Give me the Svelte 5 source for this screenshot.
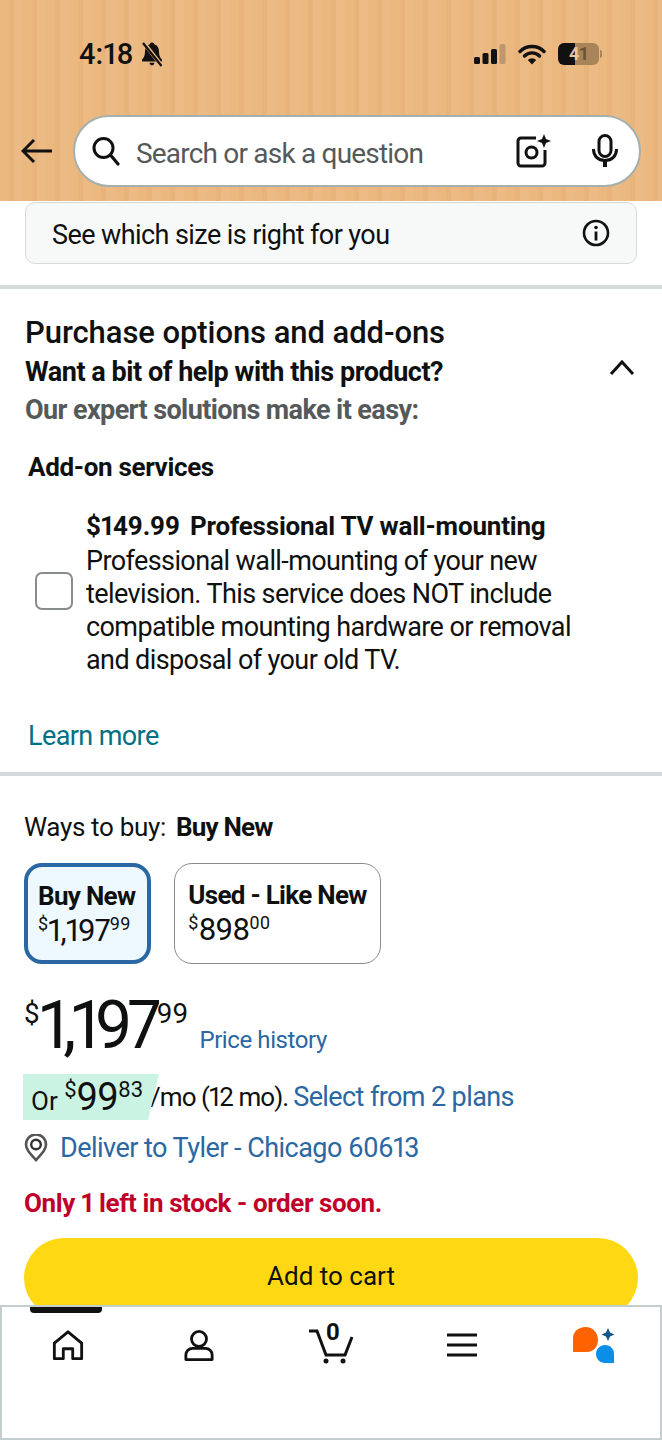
<script>
  const prices = [
    { label: 'Buy New', whole: '1,197', cents: '99', selected: true },
    { label: 'Used - Like New', whole: '898', cents: '00', selected: false }
  ];
</script>

<div class="page">
  <header class="top">
    <div class="status">
      <div class="clock">
        <span>4:18</span>
        <svg width="24" height="26" viewBox="0 0 24 26">
          <path d="M12 1.500c-1.300 0-2 .8-2.200 1.800C6.400 4.300 5 7 5 10.500c0 3.500-.8 6-3 8V20.500h20v-2c-2.200-2-3-4.500-3-8 0-3.500-1.400-6.200-4.800-7.200C14 2.300 13.300 1.500 12 1.500zM9.500 21.700c.3 1.600 1.300 2.600 2.500 2.600s2.200-1 2.500-2.600z" fill="#111"/>
          <path d="M3.500 1.500L21.500 24.500" stroke="#e9b67f" stroke-width="4"/>
          <path d="M3 2L21.500 25" stroke="#111" stroke-width="2.200"/>
        </svg>
      </div>
      <div class="sys">
        <svg width="32" height="22" viewBox="0 0 32 22">
          <rect x="0" y="14" width="6" height="7" rx="1.500" fill="#111"/>
          <rect x="8.500" y="10" width="6" height="11" rx="1.500" fill="#111"/>
          <rect x="17" y="6" width="6" height="15" rx="1.500" fill="#111"/>
          <rect x="25.500" y="1" width="6" height="20" rx="1.500" fill="#111" opacity=".2"/>
        </svg>
        <svg width="28" height="22" viewBox="0 0 28 22">
          <path d="M2 8.500a17 17 0 0 1 24 0M6.500 13a10.500 10.500 0 0 1 15 0" fill="none" stroke="#111" stroke-width="3.400" stroke-linecap="round"/>
          <path d="M14 21.500l-4.200-4.500a6 6 0 0 1 8.400 0z" fill="#111"/>
        </svg>
        <div class="battery">
          <div class="level"></div>
          <span class="d1">4</span><span class="d2">1</span>
        </div>
      </div>
    </div>

    <div class="searchrow">
      <svg class="back" width="32" height="26" viewBox="0 0 32 26">
        <path d="M31 13H2M13 2L2 13l11 11" fill="none" stroke="#111" stroke-width="3"/>
      </svg>
      <div class="search">
        <svg width="30" height="30" viewBox="0 0 30 30">
          <circle cx="12.500" cy="12" r="9.500" fill="none" stroke="#111" stroke-width="3"/>
          <path d="M19.500 19l7.500 9" stroke="#111" stroke-width="3.200" stroke-linecap="round"/>
        </svg>
        <span class="placeholder">Search or ask a question</span>
        <svg class="lens" width="36" height="34" viewBox="0 0 36 34">
          <path d="M20 4H5a3 3 0 0 0-3 3v22a3 3 0 0 0 3 3h21a3 3 0 0 0 3-3V16" fill="none" stroke="#111" stroke-width="3"/>
          <circle cx="15.500" cy="18.500" r="5.500" fill="none" stroke="#111" stroke-width="3"/>
          <path d="M28 0l2 5 5 2-5 2-2 5-2-5-5-2 5-2z" fill="#111"/>
        </svg>
        <svg class="mic" width="28" height="34" viewBox="0 0 28 34">
          <rect x="8" y="1.500" width="12" height="21" rx="6" fill="none" stroke="#111" stroke-width="3"/>
          <path d="M2.500 15c0 7 4.500 11.500 11.500 11.500S25.500 22 25.500 15" fill="none" stroke="#111" stroke-width="3"/>
          <path d="M14 26v7" stroke="#111" stroke-width="4"/>
        </svg>
      </div>
    </div>
  </header>

  <div class="sizebox">
    <span>See which size is right for you</span>
    <svg width="28" height="28" viewBox="0 0 28 28">
      <circle cx="14" cy="14" r="12" fill="none" stroke="#111" stroke-width="2.600"/>
      <circle cx="14" cy="8.500" r="1.800" fill="#111"/>
      <path d="M14 12.500v9" stroke="#111" stroke-width="2.800"/>
    </svg>
  </div>

  <section class="addons">
    <h2>Purchase options and add-ons</h2>
    <div class="helprow">
      <div>
        <div class="help">Want a bit of help with this product?</div>
        <div class="expert">Our expert solutions make it easy:</div>
      </div>
      <svg class="chevron" width="26" height="16" viewBox="0 0 26 16">
        <path d="M2 15L13 3l11 12" fill="none" stroke="#111" stroke-width="3"/>
      </svg>
    </div>
    <h3>Add-on services</h3>
    <div class="service">
      <div class="check"></div>
      <div class="desc">
        <div class="svc-title"><span>$149.99</span><span>Professional TV wall-mounting</span></div>
        <p>Professional wall-mounting of your new television. This service does NOT include compatible mounting hardware or removal and disposal of your old TV.</p>
      </div>
    </div>
    <a class="learn" href="#learn">Learn more</a>
  </section>

  <section class="buy">
    <div class="ways">Ways to buy:<b>Buy New</b></div>
    <div class="options">
      {#each prices as p}
        <div class="option" class:selected={p.selected}>
          <b>{p.label}</b>
          <div class="optprice"><sup>$</sup>{p.whole}<sup class="c">{p.cents}</sup></div>
        </div>
      {/each}
    </div>
    <div class="pricerow">
      <div class="bigprice"><sup>$</sup>1,197<sup class="c">99</sup></div>
      <a class="history" href="#history">Price history</a>
    </div>
    <div class="monthly">
      <span class="tag">Or <span class="tagprice"><sup>$</sup>99<sup class="c">83</sup></span></span>
      <span class="mo">/mo (12 mo).</span>
      <a href="#plans">Select from 2 plans</a>
    </div>
    <div class="deliver">
      <svg width="24" height="28" viewBox="0 0 24 28">
        <path d="M12 26C6 19.500 2 15.500 2 10.500a10 10 0 0 1 20 0C22 15.500 18 19.500 12 26z" fill="none" stroke="#555" stroke-width="2.600"/>
        <circle cx="12" cy="10.500" r="4.800" fill="none" stroke="#333" stroke-width="2.400"/>
      </svg>
      <a href="#deliver">Deliver to Tyler - Chicago 60613</a>
    </div>
    <div class="stock">Only 1 left in stock - order soon.</div>
    <div class="cart">Add to cart</div>
  </section>

  <nav class="tabs">
    <div class="indicator"></div>
    <svg width="32" height="32" viewBox="0 0 34 32">
      <path d="M2.500 30.500V14L17 2l14.500 12v16.500H22V20h-10v10.500z" fill="none" stroke="#111" stroke-width="3" stroke-linejoin="round"/>
    </svg>
    <svg width="30" height="33" viewBox="0 0 32 34">
      <circle cx="16" cy="10" r="8" fill="none" stroke="#111" stroke-width="3"/>
      <path d="M9 20h14a7 7 0 0 1 7 7v5H2v-5a7 7 0 0 1 7-7z" fill="none" stroke="#111" stroke-width="3" stroke-linejoin="round"/>
    </svg>
    <div class="carticon">
      <svg width="46" height="38" viewBox="0 0 46 38">
        <path d="M1 5h8l9 24h19l7-18" fill="none" stroke="#111" stroke-width="3"/>
        <circle cx="18" cy="35" r="2.500" fill="#111"/>
        <circle cx="35" cy="35" r="2.500" fill="#111"/>
      </svg>
      <span>0</span>
    </div>
    <svg width="30" height="24" viewBox="0 0 30 24">
      <path d="M0 2h30M0 12h30M0 22h30" stroke="#111" stroke-width="3"/>
    </svg>
    <svg width="42" height="38" viewBox="0 0 42 38">
      <path d="M12.500 1C20 1 25 7 25 14c0 7-5 12-11 12H0V12C0 6 5 1 12.500 1z" fill="#ff6200"/>
      <path d="M32 19c5.500 0 9 4 9 9v9h-9c-5 0-9-4-9-9s4-9 9-9z" fill="#0a8fe8"/>
      <path d="M35 2l2 4.500 4.500 2-4.500 2-2 4.500-2-4.500-4.500-2 4.500-2z" fill="#13568a"/>
    </svg>
  </nav>
</div>

<style>
  :global(body) {
    margin: 0;
    background: #fff;
  }

  .page {
    position: relative;
    width: 662px;
    height: 1440px;
    overflow: hidden;
    background: #fff;
    color: #0f1111;
    font-family: Roboto, 'Noto Sans', sans-serif;
    font-variant-numeric: proportional-nums;
  }

  a {
    color: #2a67a3;
    text-decoration: none;
  }

  sup {
    font-size: 0.58em;
    line-height: 0;
    letter-spacing: 0;
    vertical-align: baseline;
    position: relative;
    top: -0.6em;
  }

  .top {
    height: 201px;
    box-sizing: border-box;
    padding-top: 34px;
    background: repeating-linear-gradient(90deg, #ebb880 0 9px, #e8b47c 9px 14px, #ecba84 14px 23px);
  }

  .status {
    display: flex;
    justify-content: space-between;
    align-items: center;
    height: 40px;
    padding: 0 63px 0 79px;
  }

  .clock {
    display: flex;
    align-items: center;
    gap: 6px;
    font-size: 29px;
    font-weight: 500;
    color: #111;
  }

  .sys {
    display: flex;
    align-items: center;
    gap: 12px;
  }

  .battery {
    position: relative;
    width: 41px;
    height: 22px;
    border-radius: 6px;
    background: linear-gradient(90deg, #111 17px, #a98458 17px);
    text-align: center;
    font-size: 18px;
    font-weight: 700;
    line-height: 22px;
  }

  .battery::after {
    content: '';
    position: absolute;
    right: -3px;
    top: 7px;
    width: 2px;
    height: 8px;
    border-radius: 0 2px 2px 0;
    background: #a98458;
  }

  .d1 {
    color: #e9c59c;
  }

  .d2 {
    color: #6b5236;
  }

  .searchrow {
    display: flex;
    align-items: center;
    gap: 20px;
    margin-top: 41px;
    padding-left: 21px;
  }

  .back {
    flex: none;
  }

  .search {
    flex: none;
    display: flex;
    align-items: center;
    width: 568px;
    height: 72px;
    box-sizing: border-box;
    padding: 0 20px 0 16px;
    border: 2px solid #a3b0ad;
    border-radius: 36px;
    background: #fff;
  }

  .placeholder {
    flex: 1;
    margin: 4px 0 0 15px;
    font-size: 28px;
    letter-spacing: -0.8px;
    color: #565959;
  }

  .lens {
    margin-right: 39px;
  }

  .sizebox {
    display: flex;
    align-items: center;
    justify-content: space-between;
    box-sizing: border-box;
    height: 62px;
    margin: 1px 25px 0;
    padding: 0 26px;
    border: 1px solid #d5dbdb;
    border-radius: 10px;
    background: #f7f9f9;
    font-size: 27px;
    letter-spacing: -0.58px;
  }

  .sizebox span {
    margin-top: 3px;
  }

  .addons {
    margin-top: 21px;
    padding: 27px 25px 0;
    height: 491px;
    box-sizing: border-box;
    border-top: 4px solid #d5dbdb;
    border-bottom: 4px solid #d5dbdb;
  }

  h2 {
    margin: 0;
    font-size: 31px;
    font-weight: 500;
    letter-spacing: -0.07px;
    line-height: 34px;
  }

  .helprow {
    display: flex;
    justify-content: space-between;
    align-items: flex-start;
    padding-right: 2px;
  }

  .help {
    margin-top: 6px;
    font-size: 27px;
    font-weight: 700;
    letter-spacing: -0.46px;
    line-height: 32px;
  }

  .expert {
    margin-top: 6px;
    font-size: 27px;
    font-weight: 700;
    letter-spacing: -0.6px;
    line-height: 32px;
    color: #565959;
  }

  .chevron {
    margin-top: 9px;
  }

  h3 {
    margin: 25px 0 0 3px;
    font-size: 26px;
    font-weight: 700;
    letter-spacing: -0.33px;
    line-height: 32px;
  }

  .service {
    display: flex;
    align-items: center;
    gap: 13px;
    margin: 27px 0 0 10px;
  }

  .check {
    flex: none;
    width: 38px;
    height: 38px;
    margin-top: -6px;
    box-sizing: border-box;
    border: 2px solid #888c8c;
    border-radius: 7px;
  }

  .desc {
    width: 500px;
  }

  .svc-title {
    display: flex;
    gap: 10px;
    font-size: 26px;
    font-weight: 700;
    letter-spacing: -0.2px;
    line-height: 32px;
  }

  .desc p {
    margin: 3px 0 0;
    font-size: 27px;
    letter-spacing: -0.6px;
    line-height: 33px;
  }

  .learn {
    display: block;
    margin: 42px 0 0 3px;
    font-size: 27px;
    letter-spacing: -0.6px;
    line-height: 34px;
    color: #007185;
  }

  .buy {
    padding: 0 24px;
  }

  .ways {
    margin-top: 35px;
    font-size: 26px;
    letter-spacing: -0.33px;
    line-height: 32px;
  }

  .ways b {
    margin-left: 10px;
    letter-spacing: -0.8px;
  }

  .options {
    display: flex;
    gap: 23px;
    margin-top: 20px;
  }

  .option {
    height: 101px;
    box-sizing: border-box;
    padding: 15px 13px 0;
    border: 1px solid #888c8c;
    border-radius: 18px;
  }

  .option.selected {
    padding: 13px 12px 0 10px;
    border: 4px solid #2a67a3;
    background: #edf8ff;
  }

  .option b {
    display: block;
    font-size: 26px;
    letter-spacing: -0.7px;
    line-height: 32px;
  }

  .optprice {
    font-size: 31px;
    letter-spacing: -1px;
    line-height: 36px;
    margin-top: 1px;
  }

  .pricerow {
    display: flex;
    align-items: baseline;
    margin-top: 26px;
  }

  .bigprice {
    font-size: 66px;
    letter-spacing: -5px;
    line-height: 72px;
  }

  .bigprice sup {
    font-size: 0.42em;
    top: -0.9em;
  }

  .history {
    margin-left: 11px;
    font-size: 24px;
    letter-spacing: -0.4px;
  }

  .monthly {
    display: flex;
    align-items: center;
    margin-top: 12px;
    font-size: 26px;
    height: 46px;
  }

  .tag {
    flex: none;
    display: block;
    box-sizing: border-box;
    width: 136px;
    height: 46px;
    padding-left: 8px;
    margin-left: -1px;
    line-height: 46px;
    background: #caf3e3;
    clip-path: polygon(0 0, 100% 0, 92% 100%, 0 100%);
  }

  .tagprice {
    font-size: 38px;
    letter-spacing: -1px;
  }

  .mo {
    margin: 0 5px 0 -9px;
    letter-spacing: -0.95px;
  }

  .monthly a {
    font-size: 27px;
    letter-spacing: -0.6px;
  }

  .deliver {
    display: flex;
    align-items: center;
    gap: 12px;
    margin-top: 10px;
    font-size: 27px;
    letter-spacing: -0.53px;
    line-height: 36px;
  }

  .stock {
    margin-top: 21px;
    font-size: 26px;
    font-weight: 700;
    letter-spacing: -0.41px;
    line-height: 32px;
    color: #c1002a;
  }

  .cart {
    margin-top: 19px;
    height: 80px;
    border-radius: 40px;
    background: #ffd814;
    text-align: center;
    font-size: 26px;
    line-height: 76px;
  }

  .tabs {
    position: absolute;
    left: 0;
    right: 0;
    top: 1305px;
    bottom: 0;
    display: grid;
    grid-template-columns: repeat(5, 131.5px);
    grid-template-rows: 40px;
    justify-items: center;
    align-items: center;
    box-sizing: border-box;
    padding-top: 18px;
    background: #fff;
    border: 2px solid #c5cece;
  }

  .indicator {
    position: absolute;
    left: 28px;
    top: 0;
    width: 72px;
    height: 6px;
    border-radius: 0 0 4px 4px;
    background: #111;
  }

  .carticon {
    position: relative;
    width: 46px;
    height: 38px;
  }

  .carticon span {
    position: absolute;
    left: 18px;
    top: -8px;
    font-size: 24px;
    font-weight: 700;
  }
</style>
